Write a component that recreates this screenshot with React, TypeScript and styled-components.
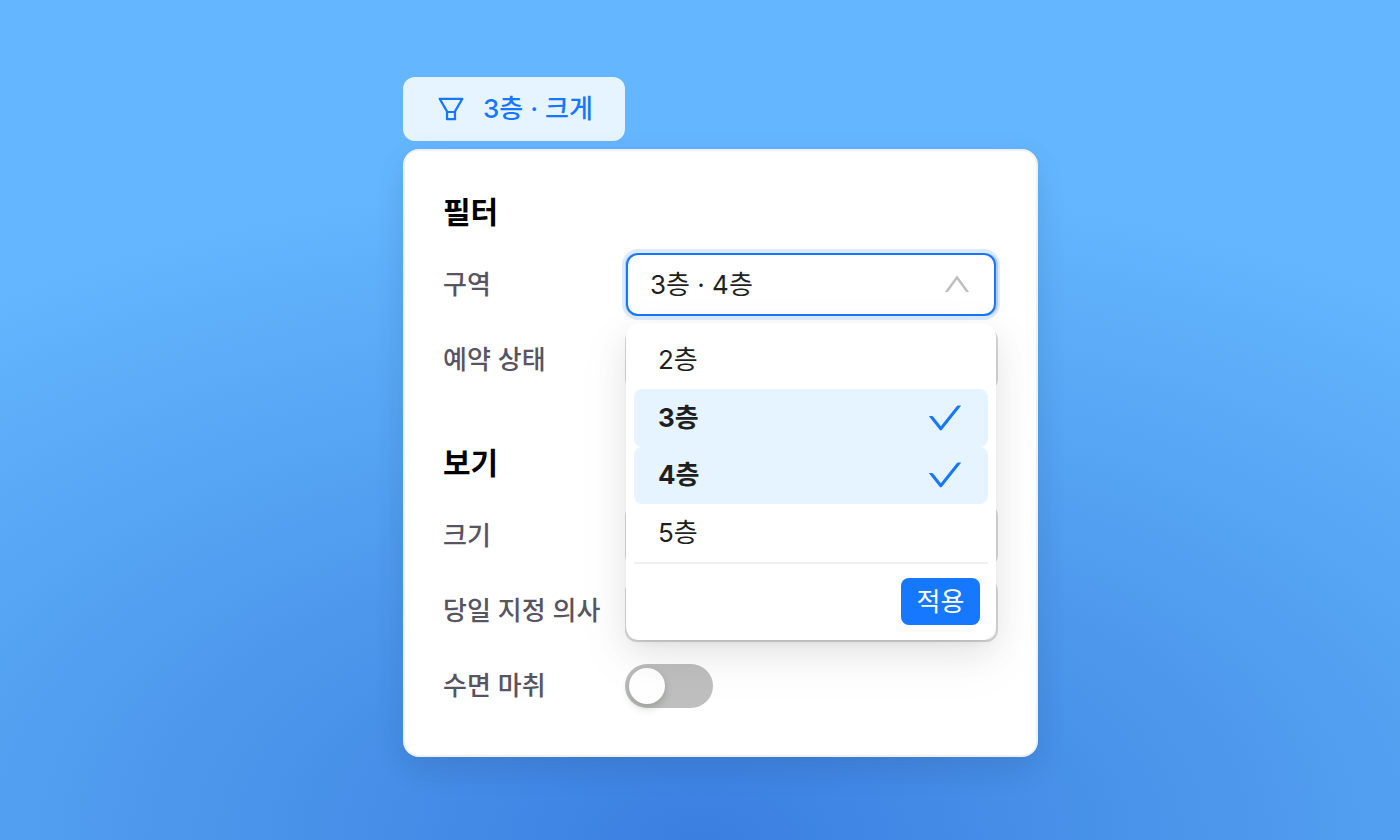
import React, { useState } from "react";
import styled, { createGlobalStyle } from "styled-components";
import { AiOutlineCheck, AiOutlineFilter, AiOutlineUp } from "react-icons/ai";

const GlobalStyle = createGlobalStyle`
  * { box-sizing: border-box; }
  body {
    margin: 0;
    font-family: Inter, "Noto Sans CJK KR", sans-serif;
    font-size: 26px;
    line-height: 36px;
    color: #1f1f1f;
  }
  button, select, input { font: inherit; color: inherit; margin: 0; }
`;

const Page = styled.main`
  min-height: 100vh;
  display: flex;
  flex-direction: column;
  align-items: center;
  padding: 77px 0 83px 41px;
  background: radial-gradient(1240px 680px at 50% 100%, #3b7fe1 0%, #4b95eb 38%, #64b7ff 100%) #64b7ff;
`;

const Popover = styled.div`
  width: 100%;
  max-width: 635px;
  display: flex;
  flex-direction: column;
  align-items: flex-start;
  gap: 8px;
`;

const Trigger = styled.button`
  display: flex;
  align-items: center;
  gap: 16px;
  height: 64px;
  padding: 0 32px;
  border: 0;
  border-radius: 12px;
  background: #e6f4ff;
  color: #1677ff;
  font-weight: 500;
  cursor: pointer;
`;

const Panel = styled.form`
  position: relative;
  width: 100%;
  padding: 41px 40px 40px;
  border-radius: 16px;
  background: #fff;
  box-shadow:
    inset 0 0 0 2px rgba(0, 0, 0, 0.06),
    0 12px 32px rgba(0, 0, 0, 0.08),
    0 4px 40px rgba(0, 0, 0, 0.03);
`;

const Section = styled.section`
  display: flex;
  flex-direction: column;
  gap: 12px;

  & + & { margin-top: 50px; }
`;

const SectionTitle = styled.h2`
  margin: 0 0 7px;
  font-size: 30px;
  line-height: 44px;
  font-weight: 600;
  color: #000;
`;

const Row = styled.div`
  display: grid;
  grid-template-columns: 182px 1fr;
  align-items: center;
  height: 63px;
`;

const RowLabel = styled.label`
  font-weight: 500;
  color: #57555f;
  white-space: nowrap;
`;

const Field = styled.div`
  position: relative;
  height: 63px;
  border-radius: 12px;
  background: #fff;
  box-shadow: inset 0 0 0 2px #d9d9d9;
`;

const Select = styled.select<{ $open?: boolean }>`
  appearance: none;
  display: block;
  width: ${(p) => (p.$open ? "calc(100% - 3px)" : "100%")};
  height: 63px;
  margin-left: ${(p) => (p.$open ? "1px" : "0")};
  padding: 0 56px 0 22px;
  border: 2px solid ${(p) => (p.$open ? "#1677ff" : "transparent")};
  border-radius: 12px;
  background: ${(p) => (p.$open ? "#fff" : "transparent")};
  box-shadow: ${(p) => (p.$open ? "0 0 0 4px rgba(22, 119, 255, 0.15)" : "none")};
  outline: none;
`;

const Arrow = styled(AiOutlineUp)`
  position: absolute;
  top: 15px;
  right: 25px;
  width: 32px;
  height: 32px;
  color: #bfbfbf;
  pointer-events: none;
`;

const Menu = styled.div`
  position: absolute;
  z-index: 2;
  top: 70px;
  left: 1px;
  right: 2px;
  padding: 8px;
  border-radius: 14px;
  background: #fff;
  box-shadow:
    0 12px 32px rgba(0, 0, 0, 0.08),
    0 6px 12px -8px rgba(0, 0, 0, 0.12),
    0 18px 56px 8px rgba(0, 0, 0, 0.04);
`;

const OptionList = styled.div`
  display: grid;
  grid-auto-rows: 1fr;
  height: 231px;
`;

const Option = styled.label<{ $selected: boolean }>`
  display: flex;
  align-items: center;
  justify-content: space-between;
  padding: 0 23px 0 24px;
  border-radius: 8px;
  background: ${(p) => (p.$selected ? "#e6f4ff" : "transparent")};
  font-weight: ${(p) => (p.$selected ? 700 : 400)};
  cursor: pointer;

  input {
    appearance: none;
    width: 0;
    height: 0;
  }
`;

const OptionCheck = styled(AiOutlineCheck)`
  width: 40px;
  height: 40px;
  color: #1677ff;
`;

const MenuFooter = styled.div`
  display: flex;
  justify-content: flex-end;
  padding: 14px 8px 7px;
  border-top: 2px solid #f0f0f0;
`;

const ApplyButton = styled.button`
  width: 79px;
  height: 47px;
  padding: 0;
  border: 0;
  border-radius: 8px;
  background: #1677ff;
  color: #fff;
  cursor: pointer;
`;

const Switch = styled.input`
  appearance: none;
  width: 88px;
  height: 44px;
  padding: 4px;
  border-radius: 22px;
  background: #bfbfbf;
  cursor: pointer;

  &::before {
    content: "";
    display: block;
    width: 36px;
    height: 36px;
    border-radius: 18px;
    background: #fff;
    box-shadow: 0 4px 8px rgba(0, 35, 11, 0.2);
  }

  &:checked { background: #1677ff; }
  &:checked::before { margin-left: 44px; }
`;

const floors = ["2층", "3층", "4층", "5층"];

function PlainSelect({ id, label }: { id: string; label: string }) {
  return (
    <Row>
      <RowLabel htmlFor={id}>{label}</RowLabel>
      <Field>
        <Select id={id} />
      </Field>
    </Row>
  );
}

export default function App() {
  const [selected, setSelected] = useState(["3층", "4층"]);

  const toggle = (floor: string) =>
    setSelected((current) =>
      floors.filter((f) => (f === floor ? !current.includes(f) : current.includes(f)))
    );

  return (
    <>
      <GlobalStyle />
      <Page>
        <Popover>
          <Trigger type="button">
            <AiOutlineFilter size={32} />
            <span>3층 · 크게</span>
          </Trigger>
          <Panel onSubmit={(e) => e.preventDefault()}>
            <Section>
              <SectionTitle>필터</SectionTitle>
              <Row>
                <RowLabel htmlFor="zone">구역</RowLabel>
                <Field>
                  <Select id="zone" $open onMouseDown={(e) => e.preventDefault()}>
                    <option>{selected.join(" · ")}</option>
                  </Select>
                  <Arrow />
                  <Menu>
                    <OptionList>
                      {floors.map((floor) => {
                        const on = selected.includes(floor);
                        return (
                          <Option key={floor} $selected={on}>
                            <span>{floor}</span>
                            <input type="checkbox" checked={on} onChange={() => toggle(floor)} />
                            {on && <OptionCheck />}
                          </Option>
                        );
                      })}
                    </OptionList>
                    <MenuFooter>
                      <ApplyButton type="submit">적용</ApplyButton>
                    </MenuFooter>
                  </Menu>
                </Field>
              </Row>
              <PlainSelect id="status" label="예약 상태" />
            </Section>
            <Section>
              <SectionTitle>보기</SectionTitle>
              <PlainSelect id="size" label="크기" />
              <PlainSelect id="doctor" label="당일 지정 의사" />
              <Row>
                <RowLabel htmlFor="sedation">수면 마취</RowLabel>
                <Switch id="sedation" type="checkbox" role="switch" />
              </Row>
            </Section>
          </Panel>
        </Popover>
      </Page>
    </>
  );
}
